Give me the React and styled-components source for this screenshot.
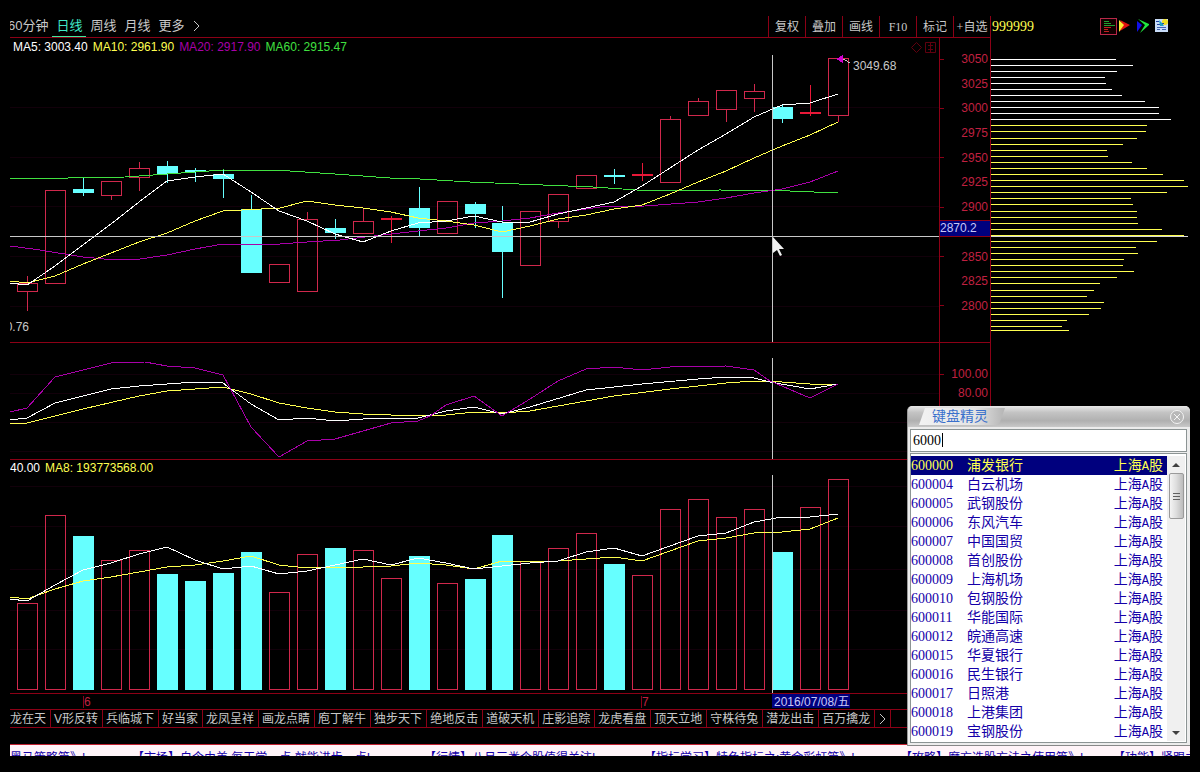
import { useState } from "react";
import styled, { createGlobalStyle } from "styled-components";

const sans = `"Liberation Sans", "Noto Sans CJK SC", sans-serif`;
const serif = `"Liberation Serif", "Noto Sans CJK SC", serif`;

const colors = {
  line: "#8c0016",
  grid: "#12000a",
  up: "#d0284c",
  down: "#66ffff",
  axis: "#c02040",
  text: "#c8c8c8",
  yellow: "#ffff50",
  magenta: "#a800a8",
  green: "#40e040",
  navy: "#00007e",
  blue: "#1400a8",
};

const GlobalStyle = createGlobalStyle`
  * {
    box-sizing: border-box;
  }
  body {
    margin: 0;
    background: #000;
    color: ${colors.text};
    font: 12px/14px ${sans};
  }
  button {
    border: 0;
    padding: 0;
    background: none;
    font: inherit;
    color: inherit;
    cursor: pointer;
  }
`;

const Page = styled.div`
  position: relative;
  min-height: 100vh;
  padding: 16px 10px;
`;

const Workspace = styled.main`
  display: grid;
  grid-template-columns: minmax(0, 1fr) 200px;
`;

const MainColumn = styled.section`
  min-width: 0;
`;

const SideColumn = styled.aside`
  border-left: 1px solid ${colors.line};
`;

const Toolbar = styled.nav`
  display: flex;
  justify-content: space-between;
  height: 22px;
  overflow: hidden;
  border-bottom: 1px solid ${colors.line};
`;

const PeriodList = styled.div`
  display: flex;
  margin-left: -6px;
`;

const PeriodButton = styled.button`
  padding: 0 4px;
  font-size: 13px;
  white-space: nowrap;
  color: ${(props) => (props.$active ? "#40e8c8" : colors.text)};
  border-bottom: 1px solid ${(props) => (props.$active ? "#40e8a0" : "transparent")};
`;

const ToolList = styled.div`
  display: flex;
`;

const ToolButton = styled.button`
  width: 37px;
  border-left: 1px solid ${colors.line};
  font-family: ${serif};
  white-space: nowrap;
`;

const Chevron = styled.svg`
  display: block;
  width: 8px;
  height: 12px;
  fill: none;
  stroke: ${colors.text};
`;

const Panel = styled.div`
  display: flex;
  border-bottom: 1px solid ${colors.line};
`;

const Plot = styled.div`
  flex: 1;
  min-width: 0;
`;

const PlotSvg = styled.svg`
  display: block;
  width: 100%;
  height: ${(props) => props.$height}px;
  shape-rendering: crispEdges;
  font-family: ${sans};
  font-size: 12px;
`;

const Legend = styled.div`
  display: flex;
  align-items: center;
  gap: 5px;
  height: ${(props) => props.$height}px;
  padding: 0 ${(props) => props.$indent}px;
  overflow: hidden;
  white-space: nowrap;
`;

const LegendItem = styled.span`
  color: ${(props) => props.$color};
`;

const PanelTools = styled.svg`
  width: 25px;
  height: 14px;
  margin-left: auto;
  fill: none;
  stroke: #60000e;
`;

const Axis = styled.div`
  position: relative;
  width: 51px;
  padding: ${(props) => props.$top}px 2px 0 0;
  border-left: 1px solid ${colors.line};
`;

const AxisLabels = styled.ul`
  display: flex;
  flex-direction: column;
  justify-content: space-between;
  height: ${(props) => props.$height}px;
  margin: 0;
  padding: 0;
  list-style: none;
`;

const AxisLabel = styled.li`
  display: flex;
  align-items: center;
  height: 14px;
  color: ${colors.axis};

  span {
    margin-left: auto;
  }

  &:nth-child(odd)::before {
    content: "";
    width: 4px;
    height: 1px;
    background: ${colors.line};
  }
`;

const PriceBadge = styled.div`
  position: absolute;
  top: 182px;
  left: 0;
  right: 0;
  height: 17px;
  background: ${colors.navy};
  border: solid ${colors.line};
  border-width: 1px 0;
  color: #c8c8f8;
`;

const DateAxis = styled.div`
  border-bottom: 1px solid ${colors.line};
`;

const StrategyTabs = styled.nav`
  display: flex;
  height: 18px;
  overflow: hidden;
  border-bottom: 1px solid ${colors.line};
`;

const StrategyTrack = styled.div`
  display: flex;
  margin-left: -15px;
`;

const StrategyTab = styled.button`
  flex: none;
  padding: 0 4px 0 3px;
  border-right: 1px solid ${colors.line};
  white-space: nowrap;
`;

const QuoteHeader = styled.header`
  display: flex;
  align-items: center;
  justify-content: space-between;
  height: 22px;
  padding: 0 21px 0 1px;
`;

const QuoteCode = styled.span`
  color: ${colors.yellow};
  font: 14px/18px ${serif};
`;

const QuoteIcons = styled.svg`
  width: 69px;
  height: 18px;
`;

const Ticker = styled.div`
  display: grid;
  grid-template-columns: 122px 292px 220px 256px 213px 1fr;
  height: 12px;
  margin-top: 16px;
  padding-top: 6px;
  overflow: hidden;
  background: #fff4f8;
  border-top: 1px solid #c02030;
`;

const TickerLink = styled.a`
  overflow: hidden;
  color: ${colors.blue};
  text-decoration: none;
  white-space: nowrap;
`;

const Wizard = styled.section`
  position: absolute;
  top: 406px;
  right: 10px;
  width: 283px;
  padding: 0 3px 2px 2px;
  background: #ececec;
  border-radius: 5px 5px 0 0;
  border-left: 1px solid #999;
  border-bottom: 1px solid #888;
`;

const WizardHeader = styled.header`
  display: flex;
  justify-content: space-between;
  align-items: center;
  height: 21px;
  margin: 0 -3px 2px -2px;
  padding: 0 5px 0 11px;
  border-radius: 5px 5px 0 0;
  background: linear-gradient(#e8e8e8, #c4c4c4 30%, #b0b0b0 70%, #c8c8c8);
`;

const WizardTitle = styled.label`
  width: 86px;
  height: 17px;
  padding-left: 13px;
  background: linear-gradient(90deg, #f2f2f2, #e4e4e4 65%, #b4b4b4);
  clip-path: polygon(6px 0, 100% 0, 80px 100%, 0 100%);
  color: #3a70cc;
  font-size: 14px;
  line-height: 17px;
`;

const CloseButton = styled.button`
  width: 16px;
  height: 16px;

  svg {
    display: block;
    fill: #b8b8b8;
    stroke: #f4f4f4;
  }
`;

const SearchBox = styled.div`
  position: relative;
  height: 23px;
  margin-bottom: 1px;
  border: 1px solid #8c9494;
  background: #fff;
`;

const SearchInput = styled.input`
  width: 100%;
  height: 21px;
  padding: 0 0 0 2px;
  border: 0;
  outline: 0;
  background: none;
  color: #000;
  font: 14px/20px ${serif};
`;

const Caret = styled.i`
  position: absolute;
  top: 3px;
  left: 31px;
  width: 1px;
  height: 14px;
  background: #000;
`;

const ResultBox = styled.div`
  display: flex;
  border: 1px solid #8c9494;
  background: #fff;
  padding: 2px 1px 1px 0;
`;

const ResultTable = styled.table`
  flex: 1;
  border-collapse: collapse;
  font: 14px/18px ${serif};
`;

const ResultRow = styled.tr`
  height: 19px;
  cursor: default;
  background: ${(props) => (props.$selected ? colors.navy : "none")};
  color: ${(props) => (props.$selected ? colors.yellow : colors.blue)};
`;

const ResultCell = styled.td`
  width: ${(props) => props.$width};
  padding: 1px ${(props) => (props.$end ? 4 : 0)}px 0 0;
  text-align: ${(props) => (props.$end ? "right" : "left")};
  white-space: nowrap;
`;

const Latin = styled.span`
  font: 12px/14px "Liberation Mono", monospace;
`;

const ScrollBar = styled.div`
  display: flex;
  flex-direction: column;
  align-items: center;
  width: 18px;
  background: #f0f0f0;
`;

const ScrollArrow = styled.button`
  width: 16px;
  height: 17px;
  margin-top: ${(props) => (props.$last ? "auto" : 0)};

  svg {
    display: block;
    margin: auto;
    fill: #404040;
  }
`;

const ScrollThumb = styled.div`
  display: flex;
  flex-direction: column;
  justify-content: center;
  align-items: center;
  gap: 2px;
  width: 15px;
  height: 46px;
  border: 1px solid #9a9a9a;
  border-radius: 2px;
  background: linear-gradient(90deg, #f4f4f4, #dcdcdc 50%, #bcbcbc);
`;

const Grip = styled.i`
  width: 7px;
  height: 1px;
  background: #606060;
`;

const periods = ["60分钟", "日线", "周线", "月线", "更多"];
const tools = ["复权", "叠加", "画线", "F10", "标记", "+自选"];
const prices = [3050, 3025, 3000, 2975, 2950, 2925, 2900, "", 2850, 2825, 2800];
const strategies = [
  "飞龙在天", "V形反转", "兵临城下", "好当家", "龙凤呈祥", "画龙点睛",
  "庖丁解牛", "独步天下", "绝地反击", "道破天机", "庄影追踪", "龙虎看盘",
  "顶天立地", "守株待兔", "潜龙出击", "百万擒龙",
];
const news = [
  "黑马策略篇》!",
  "【市场】自今由美,每天学一点,就能进步一点!",
  "【行情】八月三类个股值得关注!",
  "【指标学习】特色指标之:黄金彩虹篇》!",
  "【攻略】魔方选股方法之使用篇》!",
  "【功能】紧跟主力",
];
const stocks = [
  ["600000", "浦发银行"],
  ["600004", "白云机场"],
  ["600005", "武钢股份"],
  ["600006", "东风汽车"],
  ["600007", "中国国贸"],
  ["600008", "首创股份"],
  ["600009", "上海机场"],
  ["600010", "包钢股份"],
  ["600011", "华能国际"],
  ["600012", "皖通高速"],
  ["600015", "华夏银行"],
  ["600016", "民生银行"],
  ["600017", "日照港"],
  ["600018", "上港集团"],
  ["600019", "宝钢股份"],
];

// [high, body top, body bottom, low, falling, volume top]
const candles = [
  [276, 283, 291, 311, 0, 603],
  [190, 190, 283, 283, 0, 515],
  [178, 189, 193, 196, 1, 536],
  [181, 181, 195, 200, 0, 560],
  [162, 168, 177, 191, 0, 550],
  [161, 166, 174, 183, 1, 574],
  [168, 170, 171, 182, 1, 581],
  [169, 174, 179, 198, 1, 573],
  [195, 209, 273, 273, 1, 552],
  [264, 264, 282, 282, 0, 592],
  [212, 219, 291, 291, 0, 554],
  [219, 228, 233, 239, 1, 548],
  [209, 221, 233, 233, 0, 550],
  [216, 218, 219, 243, 0, 578],
  [187, 208, 228, 236, 1, 556],
  [201, 201, 233, 233, 0, 583],
  [202, 204, 214, 228, 1, 579],
  [206, 223, 252, 298, 1, 535],
  [211, 211, 265, 265, 0, 561],
  [194, 194, 221, 228, 0, 548],
  [175, 175, 188, 188, 0, 533],
  [169, 175, 177, 184, 1, 564],
  [163, 174, 175, 181, 0, 575],
  [116, 119, 182, 182, 0, 509],
  [98, 101, 115, 115, 0, 499],
  [90, 90, 109, 122, 0, 517],
  [84, 91, 98, 112, 0, 509],
  [105, 107, 119, 123, 1, 552],
  [85, 112, 113, 116, 0, 507],
  [58, 58, 115, 122, 0, 479],
];

const ma5 = "10,283 27,285 55,266 83,245 111,224 139,202 167,181 195,177 223,174 251,192 279,211 307,221 335,234 363,242 391,231 418,223 446,221 474,216 502,222 530,222 558,214 586,208 614,202 642,186 670,168 698,150 726,134 754,117 782,105 810,103 838,94";
const ma10 = "10,281 27,283 55,276 83,264 111,253 139,242 167,233 195,221 223,211 280,208 307,201 335,205 363,208 391,212 418,218 446,221 474,225 502,232 530,226 558,219 586,215 614,209 642,205 670,194 698,182 726,171 754,158 782,146 810,135 838,122";
const ma20 = "10,246 40,250 83,257 115,260 140,259 167,255 195,249 223,244 280,244 307,242 340,240 391,234 418,231 446,228 474,223 502,221 530,218 558,213 600,207 645,206 698,202 726,198 754,193 782,189 810,182 838,171";
const ma60 = "10,178 68,178 125,177 167,174 195,172 223,170 290,171 335,174 390,178 420,179 470,182 543,185 593,187 637,190 660,191 720,190 790,191 838,193";

const kdjJ = "10,412 27,408 55,377 83,370 111,363 145,362 167,366 195,368 223,375 251,427 279,457 307,441 335,439 363,431 391,423 418,421 430,416 446,405 474,396 502,416 530,399 558,381 586,369 614,367 642,370 670,367 726,366 754,370 770,381 810,398 838,384";
const kdjK = "10,420 27,418 55,403 83,396 111,389 139,386 167,384 195,382 223,383 251,404 279,420 307,418 335,421 363,419 391,418 418,418 446,411 474,407 502,414 530,407 586,390 614,387 642,384 698,379 726,377 754,378 770,382 810,389 838,384";
const kdjD = "10,424 27,423 83,409 139,396 167,391 195,389 223,387 251,394 279,403 307,408 335,412 363,414 418,416 446,415 474,412 502,413 530,411 558,406 614,396 670,389 726,383 754,381 782,382 810,384 838,384";

const volumeFast = "10,599 27,601 55,585 83,570 111,563 139,554 167,547 195,560 223,569 251,566 279,574 307,571 335,565 363,559 391,565 418,558 446,563 474,569 502,566 530,563 558,561 586,552 614,548 642,556 670,546 698,536 726,533 754,522 782,517 810,517 838,514";
const volumeSlow = "10,597 27,599 55,589 83,581 111,577 139,572 167,567 195,565 223,561 251,556 279,565 307,568 335,567 363,567 391,566 418,563 446,565 474,569 502,561 530,562 558,561 586,559 614,557 642,561 670,551 698,541 726,538 754,533 782,532 810,529 838,518";

// [y, length]
const profile = [
  [59, 126], [65, 143], [71, 127], [77, 115], [83, 116], [89, 122], [95, 132],
  [101, 155], [107, 169], [113, 169], [119, 181], [125, 157], [131, 156],
  [138, 147], [144, 133], [150, 117], [156, 118], [162, 142], [168, 157],
  [174, 173], [180, 194], [186, 198], [192, 177], [198, 141], [204, 143],
  [211, 147], [217, 147], [223, 148], [229, 172], [235, 194], [241, 167],
  [247, 146], [253, 148], [259, 134], [265, 133], [271, 144], [277, 127],
  [283, 110], [290, 104], [296, 97], [302, 114], [308, 111], [314, 99],
  [320, 77], [326, 72], [330, 79],
];

const candleX = (index) => Math.round(27 + index * 27.97);

const Curve = ({ points, color }) => (
  <polyline points={points} fill="none" stroke={color} strokeWidth="1" />
);

const GridLines = ({ rows }) =>
  rows.map((y) => <rect key={y} x="10" y={y} width="100%" height="1" fill={colors.grid} />);

const Candle = ({ index, data }) => {
  const [high, top, bottom, low, falling] = data;
  const x = candleX(index);
  const doji = bottom - top < 3;
  const color = falling ? colors.down : doji ? "#e81838" : colors.up;

  if (falling || doji) {
    return (
      <g fill={color}>
        <rect x={x} y={high} width="1" height={low - high} />
        <rect x={x - 10} y={top} width="21" height={Math.max(bottom - top, 2)} />
      </g>
    );
  }
  return (
    <g fill={color}>
      <rect x={x} y={high} width="1" height={top - high} />
      <rect x={x} y={bottom} width="1" height={low - bottom} />
      <rect x={x - 9.5} y={top + 0.5} width="20" height={bottom - top} fill="none" stroke={color} />
    </g>
  );
};

const VolumeBar = ({ index, data }) => {
  const x = candleX(index);
  const top = data[5];
  if (data[4]) {
    return <rect x={x - 10} y={top} width="21" height={690 - top} fill={colors.down} />;
  }
  return (
    <rect x={x - 9.5} y={top + 0.5} width="20" height={689 - top} fill="none" stroke={colors.up} />
  );
};

const PricePanel = () => (
  <Panel>
    <Plot>
      <Legend $height={17} $indent={3}>
        <LegendItem $color="#fff">MA5: 3003.40</LegendItem>
        <LegendItem $color={colors.yellow}>MA10: 2961.90</LegendItem>
        <LegendItem $color={colors.magenta}>MA20: 2917.90</LegendItem>
        <LegendItem $color={colors.green}>MA60: 2915.47</LegendItem>
        <PanelTools viewBox="0 0 25 14" aria-hidden="true">
          <path d="M5.5 2.5l5 5l-5 5l-5 -5z" />
          <path d="M14.5 2.5h10v10h-10zM17 5.5h5M17 9.5h5M19.5 3v9" />
        </PanelTools>
      </Legend>
      <PlotSvg $height={287}>
        <g transform="translate(-10 -55)">
          <GridLines rows={[107, 157, 206, 256, 306]} />
          {candles.map((data, index) => (
            <Candle key={index} index={index} data={data} />
          ))}
          <Curve points={ma60} color={colors.green} />
          <Curve points={ma20} color={colors.magenta} />
          <Curve points={ma10} color={colors.yellow} />
          <Curve points={ma5} color="#fff" />
          <rect x="10" y="236" width="100%" height="1" fill="#c8c8c8" />
          <rect x="772" y="54" width="1" height="288" fill="#c8c8c8" />
          <path d="M838 59h7M845 60l5 3" stroke="#c8c8c8" fill="none" />
          <path d="M836 59l7 -4v8z" fill="#d000d0" />
          <text x="853" y="70" fill={colors.text}>3049.68</text>
          <text x="29" y="331" textAnchor="end" fill={colors.text}>2780.76</text>
          <path
            d="M773 237v16l4 -3l3 6l2 -1l-3 -6h5z"
            fill="#f0f0f0"
            shapeRendering="auto"
          />
        </g>
      </PlotSvg>
    </Plot>
    <Axis $top={14}>
      <AxisLabels $height={261}>
        {prices.map((price, index) => (
          <AxisLabel key={index}>
            <span>{price}</span>
          </AxisLabel>
        ))}
      </AxisLabels>
      <PriceBadge>2870.2</PriceBadge>
    </Axis>
  </Panel>
);

const IndicatorPanel = () => (
  <Panel>
    <Plot>
      <PlotSvg $height={116}>
        <g transform="translate(-10 -343)">
          <GridLines rows={[374, 393, 422, 451]} />
          <Curve points={kdjD} color={colors.yellow} />
          <Curve points={kdjK} color="#fff" />
          <Curve points={kdjJ} color={colors.magenta} />
          <rect x="772" y="358" width="1" height="101" fill="#c8c8c8" />
        </g>
      </PlotSvg>
    </Plot>
    <Axis $top={24}>
      <AxisLabels $height={33}>
        <AxisLabel>
          <span>100.00</span>
        </AxisLabel>
        <AxisLabel>
          <span>80.00</span>
        </AxisLabel>
      </AxisLabels>
    </Axis>
  </Panel>
);

const VolumePanel = () => (
  <Panel>
    <Plot>
      <Legend $height={15} $indent={0}>
        <LegendItem $color="#fff">40.00</LegendItem>
        <LegendItem $color={colors.yellow}>MA8: 193773568.00</LegendItem>
      </Legend>
      <PlotSvg $height={218}>
        <g transform="translate(-10 -475)">
          <GridLines rows={[486, 526, 569, 610, 649]} />
          {candles.map((data, index) => (
            <VolumeBar key={index} index={index} data={data} />
          ))}
          <Curve points={volumeSlow} color={colors.yellow} />
          <Curve points={volumeFast} color="#fff" />
          <rect x="772" y="475" width="1" height="218" fill="#c8c8c8" />
        </g>
      </PlotSvg>
    </Plot>
    <Axis $top={0} />
  </Panel>
);

const QuoteIconSet = () => (
  <QuoteIcons viewBox="0 0 69 18" aria-hidden="true">
    <rect x="0.5" y="0.5" width="16" height="16" fill="#100" stroke="#b82848" />
    <path d="M4 3.5h5M4 7.5h11M4 5.5h7" stroke="#20a030" />
    <path d="M4 9.5h7M4 11.5h4M4 13.5h5" stroke="#c02020" />
    <path d="M20 2l10 5l-10 6l3 -6z" fill="#e01010" />
    <path d="M19 2l5 5l-5 7z" fill="#ffe830" />
    <path d="M37 3l5 4l-5 7z" fill="#1010e8" />
    <path d="M38 1l11 5v1l-9 8l5 -8z" fill="#20e840" />
    <rect x="55" y="1" width="13" height="13" fill="#c8dcf8" />
    <circle cx="65" cy="4" r="3" fill="#f0e020" />
    <path d="M56 3.5h3M60 5.5h4M57 6.5h6" stroke="#2040a0" />
    <path d="M59 2l3 3l2 3h-4z" fill="#20a0c0" />
    <path d="M57 9.5h9M57 11.5h3M62 11.5h4" stroke="#4060b0" />
  </QuoteIcons>
);

const KeyboardWizard = () => {
  const [query, setQuery] = useState("6000");

  return (
    <Wizard>
      <WizardHeader>
        <WizardTitle htmlFor="wizard-query">键盘精灵</WizardTitle>
        <CloseButton type="button" aria-label="关闭">
          <svg width="16" height="16">
            <circle cx="8" cy="8" r="6.5" />
            <path d="M5 5l6 6M11 5l-6 6" />
          </svg>
        </CloseButton>
      </WizardHeader>
      <SearchBox>
        <SearchInput
          id="wizard-query"
          value={query}
          onChange={(event) => setQuery(event.target.value)}
        />
        <Caret />
      </SearchBox>
      <ResultBox>
        <ResultTable>
          <tbody>
            {stocks.map(([code, name], index) => (
              <ResultRow key={code} $selected={index === 0}>
                <ResultCell $width="56px">{code}</ResultCell>
                <ResultCell>{name}</ResultCell>
                <ResultCell $end>
                  上海<Latin>A</Latin>股
                </ResultCell>
              </ResultRow>
            ))}
          </tbody>
        </ResultTable>
        <ScrollBar>
          <ScrollArrow type="button" aria-label="向上">
            <svg width="8" height="4">
              <path d="M4 0l4 4h-8z" />
            </svg>
          </ScrollArrow>
          <ScrollThumb>
            <Grip />
            <Grip />
            <Grip />
          </ScrollThumb>
          <ScrollArrow type="button" aria-label="向下" $last>
            <svg width="8" height="4">
              <path d="M0 0h8l-4 4z" />
            </svg>
          </ScrollArrow>
        </ScrollBar>
      </ResultBox>
    </Wizard>
  );
};

const App = () => {
  const [period, setPeriod] = useState("日线");

  return (
    <Page>
      <GlobalStyle />
      <Workspace>
        <MainColumn>
          <Toolbar>
            <PeriodList>
              {periods.map((name) => (
                <PeriodButton
                  key={name}
                  type="button"
                  $active={name === period}
                  onClick={() => setPeriod(name)}
                >
                  {name}
                </PeriodButton>
              ))}
              <PeriodButton type="button" aria-label="展开">
                <Chevron>
                  <path d="M1 1l5 5l-5 5" />
                </Chevron>
              </PeriodButton>
            </PeriodList>
            <ToolList>
              {tools.map((name) => (
                <ToolButton key={name} type="button">
                  {name}
                </ToolButton>
              ))}
            </ToolList>
          </Toolbar>
          <PricePanel />
          <IndicatorPanel />
          <VolumePanel />
          <DateAxis>
            <PlotSvg $height={15}>
              <g transform="translate(-10 -694)">
                <rect x="83" y="696" width="1" height="12" fill={colors.line} />
                <text x="84" y="706" fill={colors.axis}>6</text>
                <rect x="641" y="696" width="1" height="12" fill={colors.line} />
                <text x="642" y="706" fill={colors.axis}>7</text>
                <rect x="772" y="694" width="78" height="14" fill={colors.navy} />
                <text x="774" y="706" fill="#c8c8f8">2016/07/08/五</text>
              </g>
            </PlotSvg>
          </DateAxis>
          <StrategyTabs>
            <StrategyTrack>
              {strategies.map((name) => (
                <StrategyTab key={name} type="button">
                  {name}
                </StrategyTab>
              ))}
              <StrategyTab type="button" aria-label="更多策略">
                <Chevron>
                  <path d="M2 1l5 5l-5 5" />
                </Chevron>
              </StrategyTab>
            </StrategyTrack>
          </StrategyTabs>
        </MainColumn>
        <SideColumn>
          <QuoteHeader>
            <QuoteCode>999999</QuoteCode>
            <QuoteIconSet />
          </QuoteHeader>
          <PlotSvg $height={305}>
            <g transform="translate(-1 -38)">
              {profile.map(([y, length]) => (
                <rect
                  key={y}
                  y={y}
                  width={length}
                  height="1"
                  fill={y < 120 ? "#fff" : colors.yellow}
                />
              ))}
              <rect y="236" width="198" height="1" fill="#d8d8d8" />
            </g>
          </PlotSvg>
        </SideColumn>
      </Workspace>
      <Ticker>
        {news.map((title) => (
          <TickerLink key={title} href="#news">
            {title}
          </TickerLink>
        ))}
      </Ticker>
      <KeyboardWizard />
    </Page>
  );
};

export default App;
